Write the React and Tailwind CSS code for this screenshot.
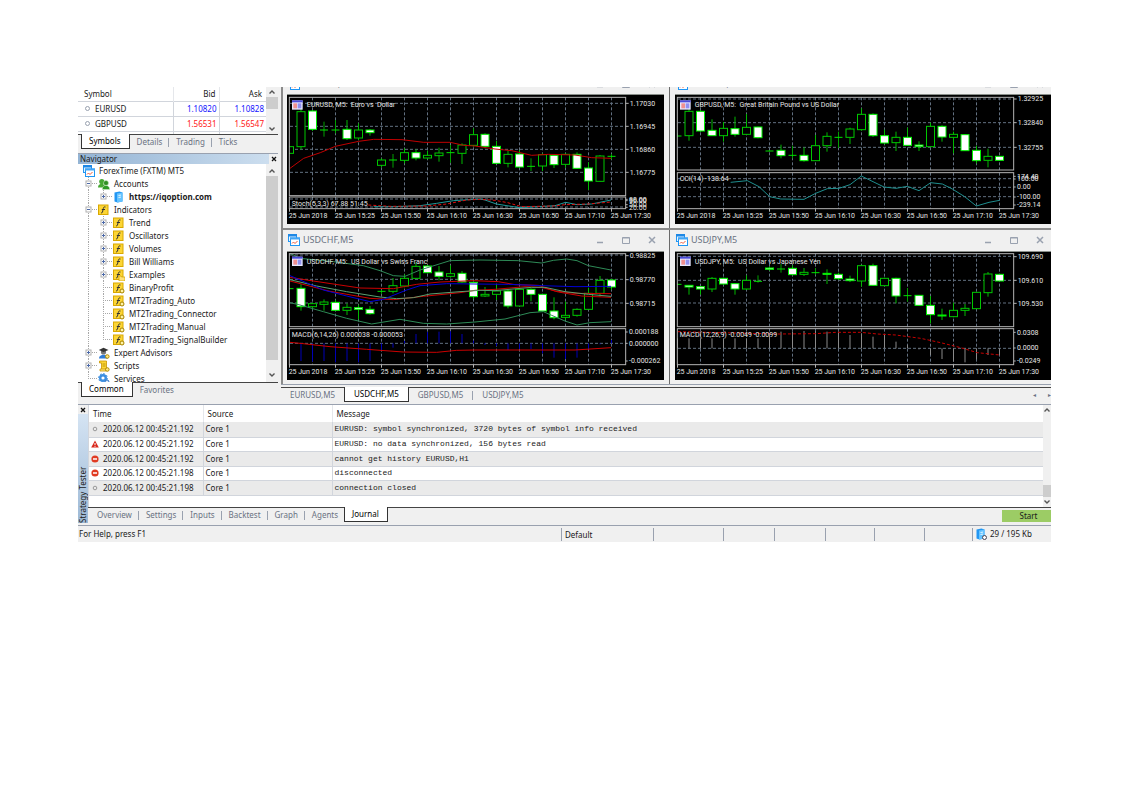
import React from 'react';
import clsx from 'clsx';

// [high, body top, body bottom, low, filled]; chart space is three units per pixel
const eurusd = {
  pair: 'EURUSD',
  name: 'Euro vs  Dollar',
  top: 45,
  height: 387,
  plot: [52, 347],
  sub: [351, 386],
  grid: [70, 139, 208, 277],
  prices: [[70, '1.17030'], [139, '1.16945'], [208, '1.16860'], [277, '1.16775']],
  subLevels: [357, 381],
  subLabels: [[358, '80.00'], [362, '96.00'], [374, '50.00'], [382, '20.00']],
  indicator: [370, 'Stoch(5,3,3) 67.88 51.45'],
  candles: [
    [198, 200, 220, 220, 0], [85, 95, 200, 208, 0], [90, 93, 148, 153, 1], [125, 150, 150, 170, 0],
    [120, 150, 150, 160, 0], [120, 148, 176, 180, 1], [130, 150, 174, 180, 0], [147, 150, 158, 167, 1],
    [235, 240, 256, 262, 0], [222, 240, 240, 263, 0], [205, 218, 241, 250, 0], [208, 218, 234, 241, 1],
    [212, 226, 234, 238, 0], [203, 219, 227, 245, 0], [195, 218, 218, 248, 0], [190, 195, 220, 252, 0],
    [145, 164, 196, 200, 0], [160, 163, 199, 205, 1], [183, 199, 250, 252, 1], [212, 223, 250, 262, 0],
    [210, 222, 261, 263, 1], [235, 259, 259, 273, 0], [220, 224, 258, 273, 0], [222, 226, 254, 264, 1],
    [220, 223, 253, 263, 0], [217, 223, 265, 267, 1], [247, 264, 303, 330, 1], [225, 228, 304, 305, 0],
    [222, 229, 229, 238, 0],
  ],
  lines: [
    { color: '#c00000', points: '9,265 50,235 100,218 145,199 215,184 260,178 345,179 410,187 490,187 530,196 564,198 624,207 674,212 734,226 784,223 864,225 914,233 972,235' },
    { color: '#1f9a9a', points: '260,380 324,380 399,377 449,370 499,362 579,357 594,360 628,372 697,383 804,377 836,367 870,374 914,372 972,360' },
    { color: '#e01010', dash: '9 6', points: '244,375 309,379 419,378 479,372 539,360 579,358 624,361 662,368 704,380 799,378 834,374 904,372 972,366' },
  ],
};

const gbpusd = {
  pair: 'GBPUSD',
  name: 'Great Britain Pound vs US Dollar',
  top: 45,
  height: 387,
  plot: [52, 270],
  sub: [278, 386],
  grid: [57, 128, 202],
  prices: [[57, '1.32925'], [128, '1.32840'], [202, '1.32755']],
  subLevels: [296, 322, 350],
  subLabels: [[289, '174.40'], [297, '100.00'], [321, '0.00'], [351, '-100.00'], [375, '-239.14']],
  indicator: [297, 'CCI(14) -138.64'],
  candles: [
    [160, 168, 168, 172, 0], [85, 94, 167, 182, 0], [90, 94, 153, 156, 1], [118, 151, 167, 168, 1],
    [126, 145, 167, 185, 0], [110, 146, 163, 170, 1], [102, 142, 163, 164, 0], [140, 141, 173, 175, 1],
    [210, 213, 213, 214, 0], [194, 211, 227, 235, 1], [197, 226, 226, 235, 0], [202, 226, 242, 245, 1],
    [165, 197, 242, 243, 0], [157, 169, 197, 215, 0], [155, 172, 172, 204, 0], [143, 147, 172, 192, 0],
    [85, 103, 149, 152, 0], [100, 103, 167, 171, 1], [149, 167, 189, 193, 1], [155, 172, 188, 213, 0],
    [143, 172, 196, 197, 1], [184, 195, 200, 213, 1], [128, 139, 200, 201, 0], [136, 139, 171, 185, 1],
    [155, 163, 172, 220, 0], [162, 164, 212, 213, 1], [197, 211, 242, 250, 1], [206, 229, 241, 262, 0],
    [228, 229, 241, 242, 1],
  ],
  lines: [
    { color: '#1f8f8f', points: '167,307 217,302 252,320 284,350 317,357 387,358 422,340 457,326 492,325 525,314 559,288 594,305 627,321 663,325 697,319 732,332 767,308 802,312 832,327 869,350 904,378 942,367 974,361' },
  ],
};

const usdchf = {
  pair: 'USDCHF',
  name: 'US Dollar vs Swiss Franc',
  top: 66,
  height: 384,
  plot: [71, 290],
  sub: [296, 404],
  grid: [75, 148, 219],
  prices: [[77, '0.98825'], [149, '0.98770'], [220, '0.98715']],
  subLevels: [340],
  subLabels: [[306, '0.000188'], [340, '0.000000'], [393, '-0.000262']],
  indicator: [315, 'MACD(6,14,26) 0.000038 -0.000053'],
  candles: [
    [174, 176, 176, 178, 0], [162, 175, 230, 242, 1], [218, 221, 230, 238, 0], [208, 216, 223, 242, 0],
    [210, 217, 241, 243, 1], [220, 232, 241, 255, 0], [224, 233, 238, 268, 1], [228, 238, 251, 254, 1],
    [180, 184, 184, 192, 0], [144, 167, 184, 190, 0], [133, 145, 168, 172, 0], [98, 109, 145, 147, 0],
    [105, 108, 128, 130, 1], [108, 126, 139, 151, 1], [106, 131, 139, 143, 0], [123, 130, 156, 158, 1],
    [155, 157, 200, 207, 1], [171, 193, 198, 201, 0], [164, 183, 193, 210, 0], [180, 183, 228, 235, 1],
    [174, 178, 228, 230, 0], [175, 178, 193, 214, 1], [192, 193, 243, 246, 1], [202, 243, 263, 268, 1],
    [215, 256, 262, 270, 0], [235, 238, 256, 260, 0], [173, 190, 238, 240, 0], [138, 151, 190, 200, 0],
    [147, 150, 171, 180, 1],
  ],
  lines: [
    { color: '#2e8b57', points: '9,70 39,85 139,95 229,107 279,122 319,137 354,139 399,120 489,92 579,90 694,92 764,99 799,91 839,87 870,92 904,107 972,120' },
    { color: '#2e8b57', points: '9,218 39,225 109,245 179,265 254,282 339,268 409,280 479,282 564,276 654,267 729,248 769,245 794,256 834,273 870,285 909,278 972,275' },
    { color: '#cc0000', points: '9,142 79,153 219,174 319,176 389,163 459,156 559,152 634,155 684,164 754,166 804,183 864,190 972,191' },
    { color: '#cc0000', points: '9,153 129,184 249,205 319,209 409,199 519,188 564,181 624,178 714,170 764,172 814,186 884,198 972,202' },
    { color: '#5aa070', points: '9,149 89,168 179,185 279,201 329,206 379,203 429,192 519,185 579,181 624,182 734,172 774,172 834,185 904,193 972,199' },
    { color: '#0000d8', points: '9,137 109,180 179,198 249,215 289,208 359,180 399,167 479,161 564,162 664,163 764,167 864,170 972,169' },
    { color: '#cc0000', points: '9,337 39,340 129,350 239,358 349,366 449,367 509,361 564,360 864,360 972,353' },
  ],
  bars: {
    color: '#0000b8',
    zero: 340,
    values: [340, 393, 395, 393, 397, 393, 397, 393, 360, 353, 333, 312, 306, 305, 304, 312, 332, 345, 348, 360, 357, 357, 370, 383, 387, 383, 358, 343, 330],
  },
};

const usdjpy = {
  pair: 'USDJPY',
  name: 'US Dollar vs Japanese Yen',
  top: 66,
  height: 384,
  plot: [71, 290],
  sub: [296, 404],
  grid: [79, 151, 219],
  prices: [[80, '109.690'], [151, '109.610'], [220, '109.530']],
  subLevels: [355],
  subLabels: [[307, '0.0308'], [354, '0.0000'], [393, '-0.0249']],
  indicator: [315, 'MACD(12,26,9) -0.0049 -0.0099'],
  candles: [
    [161, 163, 163, 165, 0], [165, 166, 171, 194, 1], [168, 170, 177, 194, 1], [141, 145, 177, 186, 0],
    [143, 145, 162, 165, 1], [160, 161, 177, 194, 1], [136, 151, 177, 180, 0], [136, 154, 154, 158, 0],
    [110, 114, 118, 122, 1], [102, 117, 117, 128, 0], [106, 115, 134, 136, 1], [114, 127, 133, 138, 0],
    [114, 128, 128, 134, 0], [118, 130, 133, 162, 1], [128, 133, 146, 150, 1], [137, 147, 152, 156, 1],
    [104, 107, 153, 170, 0], [101, 107, 166, 168, 1], [143, 145, 167, 168, 0], [143, 145, 198, 220, 1],
    [174, 197, 197, 215, 0], [195, 196, 226, 227, 1], [198, 226, 254, 280, 1], [236, 255, 258, 270, 1],
    [218, 241, 260, 262, 0], [222, 235, 241, 258, 0], [186, 187, 236, 237, 0], [126, 132, 188, 200, 0],
    [132, 133, 153, 154, 1],
  ],
  lines: [
    { color: '#c80000', dash: '9 6', points: '9,305 312,312 422,311 482,307 557,307 607,312 662,315 737,325 797,338 857,353 907,368 974,375' },
  ],
  bars: {
    color: '#8a8a8a',
    zero: 355,
    values: [325, 325, 325, 325, 325, 325, 325, 325, 310, 305, 305, 303, 303, 305, 305, 315, 310, 320, 315, 335, 345, 358, 375, 387, 395, 397, 388, 375, 375],
  },
};

const times = ['25 Jun 2018', '25 Jun 15:25', '25 Jun 15:50', '25 Jun 16:10', '25 Jun 16:30', '25 Jun 16:50', '25 Jun 17:10', '25 Jun 17:30'];

const candleX = (i) => 7.5 + i * 34.5;

const Candle = ({ x, data }) => {
  const [high, top, bottom, low, filled] = data;
  if (top === bottom) {
    return (
      <g stroke="#00e000" strokeWidth="3">
        <line x1={x} x2={x} y1={high} y2={low} stroke="#00a000" />
        <line x1={x - 12} x2={x + 12} y1={top} y2={top} />
      </g>
    );
  }
  return (
    <g strokeWidth="3">
      <line x1={x} x2={x} y1={high} y2={low} stroke="#00b800" />
      <rect
        x={x - 12}
        y={top}
        width="24"
        height={bottom - top}
        fill={filled ? '#ffffff' : '#000000'}
        stroke={filled ? '#00f000' : '#00c800'}
      />
    </g>
  );
};

const Chart = ({ chart }) => {
  const { top, height, plot, sub, bars } = chart;
  const gridLines = Array.from({ length: 14 }, (_, i) => 76.5 + i * 69);
  const right = 1016;

  return (
    <svg
      viewBox={`0 ${top} 1131 ${height}`}
      className="block h-auto w-full bg-black font-['Roboto','Liberation_Sans',sans-serif]"
      role="img"
      aria-label={`${chart.pair} M5 chart`}
    >
      <g stroke="#627080" strokeWidth="3" strokeDasharray="9 6">
        {gridLines.map((x) => (
          <React.Fragment key={x}>
            <line x1={x} x2={x} y1={plot[0]} y2={plot[1]} />
            <line x1={x} x2={x} y1={sub[0]} y2={sub[1]} />
          </React.Fragment>
        ))}
        {chart.grid.map((y) => <line key={y} x1="9" x2={right} y1={y} y2={y} />)}
        {chart.subLevels.map((y) => <line key={y} x1="9" x2={right} y1={y} y2={y} />)}
      </g>

      {/* Histogram */}
      {bars && bars.values.map((y, i) => (
        <line key={i} x1={candleX(i)} x2={candleX(i)} y1={bars.zero} y2={y} stroke={bars.color} strokeWidth="3" />
      ))}

      {chart.candles.map((c, i) => <Candle key={i} x={candleX(i)} data={c} />)}
      {chart.lines.map((l, i) => (
        <polyline key={i} points={l.points} fill="none" stroke={l.color} strokeWidth="3" strokeDasharray={l.dash} />
      ))}

      {/* Frames */}
      <rect x="0" y={plot[0]} width="6" height={sub[1] - plot[0]} fill="#000000" />
      <g fill="none" stroke="#b4b4b4" strokeWidth="3">
        <rect x="7" y={plot[0]} width={right - 7} height={plot[1] - plot[0]} />
        <rect x="7" y={sub[0]} width={right - 7} height={sub[1] - sub[0]} />
        {chart.prices.map(([y]) => <line key={y} x1={right} x2={right + 9} y1={y} y2={y} />)}
        {chart.subLabels.map(([y]) => <line key={y} x1={right} x2={right + 6} y1={y} y2={y} />)}
        {times.map((t, i) => <line key={t} x1={7.5 + i * 138} x2={7.5 + i * 138} y1={sub[1]} y2={sub[1] + 9} />)}
      </g>

      {/* Header */}
      <g>
        <rect x="15" y={plot[0] + 9} width="32" height="28" fill="#e8e8ff" />
        <rect x="15" y={plot[0] + 9} width="32" height="6" fill="#4a4ad8" />
        <rect x="19" y={plot[0] + 18} width="11" height="15" fill="#f09090" />
        <rect x="32" y={plot[0] + 18} width="11" height="15" fill="#9090f0" />
      </g>
      <g fill="#e6e6e6" fontSize="21">
        <text x="59" y={plot[0] + 30} className="whitespace-pre">{`${chart.pair}, M5:  ${chart.name}`}</text>
        <text x="14" y={chart.indicator[0] + 7}>{chart.indicator[1]}</text>
        {chart.prices.map(([y, label]) => <text key={y} x="1028" y={y + 7}>{label}</text>)}
        {chart.subLabels.map(([y, label]) => <text key={y} x="1026" y={y + 7}>{label}</text>)}
        {times.map((t, i) => <text key={t} x={5 + i * 138} y={sub[1] + 28}>{t}</text>)}
      </g>
    </svg>
  );
};

const TerminalIcon = () => (
  <svg className="h-[12px] w-[12px] shrink-0" viewBox="0 0 12 12" aria-hidden="true">
    <rect x="0.5" y="0.5" width="8" height="7" fill="#e8f4ff" stroke="#2196f3" />
    <rect x="0" y="0" width="9" height="2.5" fill="#1e88e5" />
    <rect x="2.5" y="4" width="9" height="7.5" fill="#fff" stroke="#2196f3" />
    <rect x="2" y="3.5" width="10" height="2" fill="#42a5f5" />
    <path d="M4 9.5l1.5-1.5 1.5 1.5 2.5-2.5" fill="none" stroke="#ef5a3c" />
  </svg>
);

const TitleBar = ({ title }) => (
  <div className="flex h-[20px] shrink-0 items-center pl-px">
    <TerminalIcon />
    <span className="ml-[3px] flex-1 text-[9px] text-gray-500">{title}</span>
    <div className="flex gap-[14px] pr-[6px] text-gray-400">
      <button aria-label="Minimize" className="h-[12px] w-[12px]">
        <svg viewBox="0 0 12 12"><path d="M3 8.5h6" stroke="currentColor" strokeWidth="1.5" /></svg>
      </button>
      <button aria-label="Maximize" className="h-[12px] w-[12px]">
        <svg viewBox="0 0 12 12"><path d="M2.5 3.5h7v6h-7zM2.5 4h7" fill="none" stroke="currentColor" /></svg>
      </button>
      <button aria-label="Close" className="h-[12px] w-[12px]">
        <svg viewBox="0 0 12 12"><path d="M3 3l6 6M9 3l-6 6" stroke="currentColor" strokeWidth="1.5" /></svg>
      </button>
    </div>
  </div>
);

const ChartWindow = ({ chart, cut, last }) => (
  <section className={clsx('min-w-0 pb-[4px]', last ? '-mr-px pl-[5px]' : 'border-r border-[#6a6a6a] pr-[5px] pl-[4px]')}>
    <div className={clsx('flex flex-col overflow-hidden', cut ? 'h-[7px] justify-end' : 'h-[21px]')}>
      <TitleBar title={`${chart.pair},M5`} />
    </div>
    <div className="border-t border-[#8a8f8a]">
      <Chart chart={chart} />
    </div>
  </section>
);

const TabStrip = ({ tabs, active, wide, className, children }) => (
  <div className={clsx('flex h-[15px] border-t border-[#444] bg-[#f0f0f0]', className)}>
    {tabs.map((tab, i) => {
      const on = tab === active;
      return (
        <React.Fragment key={tab}>
          <button
            className={clsx(
              'flex items-center whitespace-nowrap text-[8px]',
              wide ? 'px-[9px]' : 'pl-[7px]',
              !wide && (on ? 'pr-[8px]' : 'pr-[6px]'),
              on ? '-mt-px h-[15px] border border-t-0 border-[#333] bg-white text-black' : 'h-[14px] text-gray-500'
            )}
          >
            {tab}
          </button>
          {!on && i < tabs.length - 1 && tabs[i + 1] !== active && (
            <span className="h-[9px] w-px self-center bg-gray-400" />
          )}
        </React.Fragment>
      );
    })}
    {children}
  </div>
);

const Arrow = ({ up }) => (
  <svg viewBox="0 0 8 8" className="h-[8px] w-[8px]" aria-hidden="true">
    <path d={up ? 'M1.5 5.5L4 3l2.5 2.5' : 'M1.5 2.5L4 5l2.5-2.5'} fill="none" stroke="#555" strokeWidth="1.4" />
  </svg>
);

const ScrollBar = ({ label, className, thumb }) => (
  <div className={clsx('flex shrink-0 flex-col items-center overflow-hidden bg-[#f0f0f0]', className)}>
    <button aria-label={`${label} scroll up`} className="flex h-[10px] items-center"><Arrow up /></button>
    <div className="flex w-full min-h-0 flex-1 flex-col">
      <div className={clsx('w-full bg-[#cdcdcd]', thumb)} />
    </div>
    <button aria-label={`${label} scroll down`} className="flex h-[10px] items-center"><Arrow /></button>
  </div>
);

const quotes = [
  { symbol: 'EURUSD', bid: '1.10820', ask: '1.10828', color: 'text-[#1414ff]' },
  { symbol: 'GBPUSD', bid: '1.56531', ask: '1.56547', color: 'text-[#ff1414]' },
];

const MarketWatch = () => (
  <div>
    <div className="flex h-[47px] overflow-hidden bg-white">
      <table className="h-[48px] flex-1 table-fixed border-collapse text-[8px]">
        <thead>
          <tr className="h-[14px]">
            <th className="pl-[6px] text-left font-normal">Symbol</th>
            <th className="w-[46px] border-l border-gray-200 pr-[3px] text-right font-normal">Bid</th>
            <th className="w-[47px] border-l border-gray-200 pr-[4px] text-right font-normal">Ask</th>
          </tr>
        </thead>
        <tbody>
          {quotes.map((q) => (
            <tr key={q.symbol} className="h-[15px] border-y border-gray-300">
              <td className="pl-[7px]">
                <span className="flex items-center gap-[5px]">
                  <span className="h-[5px] w-[5px] rounded-full border border-gray-400" />
                  {q.symbol}
                </span>
              </td>
              <td className={clsx('border-l border-gray-300 pr-[2px] text-right', q.color)}>{q.bid}</td>
              <td className={clsx('border-l border-gray-300 pr-[2px] text-right', q.color)}>{q.ask}</td>
            </tr>
          ))}
          <tr>
            <td />
            <td className="border-l border-gray-300" />
            <td className="border-l border-gray-300" />
          </tr>
        </tbody>
      </table>
      <ScrollBar label="Symbols" className="w-[12px]" thumb="h-[12px]" />
    </div>
    <TabStrip tabs={['Symbols', 'Details', 'Trading', 'Ticks']} active="Symbols" className="pl-[3px]" />
  </div>
);

const FunctionIcon = ({ badge }) => (
  <svg viewBox="0 0 12 12" className="h-[12px] w-[12px] shrink-0" aria-hidden="true">
    <rect x="0.5" y="1" width="9.5" height="9.5" fill="#fcd535" stroke="#d9a800" />
    <path d="M7.5 3c-1.500-.4-2 .3-2.200 1.500l-.8 3.500c-.2.8-.6 1-1.500.8M3.800 5.500h3.200" fill="none" stroke="#333" />
    {badge === 'dot' && <circle cx="9" cy="9" r="2" fill="#fff3a8" stroke="#a88400" />}
    {badge === 'folder' && <path d="M6 7h2l.5 1H12v4H6z" fill="#ffe27a" stroke="#d0a000" strokeWidth=".7" />}
  </svg>
);

const AccountsIcon = () => (
  <svg viewBox="0 0 12 12" className="h-[12px] w-[12px] shrink-0" aria-hidden="true">
    <circle cx="3.800" cy="3.500" r="2.600" fill="#46a832" />
    <path d="M0 9.500c0-5 7-5 7.500 0z" fill="#46a832" />
    <circle cx="8" cy="5" r="2.500" fill="#2f8f22" stroke="#d8f0d0" strokeWidth=".5" />
    <path d="M4.200 11.500c0-5.500 7.500-5.500 7.500 0z" fill="#2f9a25" stroke="#d8f0d0" strokeWidth=".5" />
  </svg>
);

const ServerIcon = ({ badge }) => (
  <svg viewBox="0 0 12 12" className="h-[12px] w-[12px] shrink-0" aria-hidden="true">
    <path d="M1.500 1.500l5-1 3 1v9l-5 1-3-1z" fill="#2196f3" />
    <path d="M4 2.500l5.500-1v9l-5.500 1z" fill="#64c3ff" />
    <path d="M5.500 4.500l2.500-.4M5.500 6.500l2.500-.4" stroke="#fff" strokeWidth=".8" />
    {badge && <circle cx="9.500" cy="9.500" r="2" fill="#fff" stroke="#445" />}
  </svg>
);

const ExpertIcon = () => (
  <svg viewBox="0 0 12 12" className="h-[12px] w-[12px] shrink-0" aria-hidden="true">
    <path d="M1 11.500c0-5 9-5 9 0z" fill="#2e7bd6" />
    <circle cx="5.500" cy="5" r="2.600" fill="#777" />
    <path d="M.8 3L5.500.8l5 2.200-5 2z" fill="#333" />
    <circle cx="9.300" cy="9.500" r="1.800" fill="#ffe680" stroke="#b08a00" />
  </svg>
);

const ScriptIcon = () => (
  <svg viewBox="0 0 12 12" className="h-[12px] w-[12px] shrink-0" aria-hidden="true">
    <path d="M1.500 1h7v8.500h-5V3h-2z" fill="#fcd535" stroke="#c99700" strokeWidth=".8" />
    <path d="M4.500 4h3M4.500 6h3" stroke="#b08a00" strokeWidth=".8" />
    <path d="M2 9h6v2H2z" fill="#ffe680" stroke="#c99700" strokeWidth=".8" />
    <circle cx="9.300" cy="9.500" r="1.800" fill="#ffe680" stroke="#b08a00" />
  </svg>
);

const ServicesIcon = () => (
  <svg viewBox="0 0 12 12" className="h-[12px] w-[12px] shrink-0" aria-hidden="true">
    <circle cx="5" cy="5" r="2.800" fill="none" stroke="#3d8fe0" strokeWidth="2.400" />
    <circle cx="5" cy="5" r="4.400" fill="none" stroke="#3d8fe0" strokeDasharray="1.700 1.700" />
    <circle cx="9" cy="9" r="2" fill="#dcecff" stroke="#2a6fc0" />
  </svg>
);

// Dotted connector cell of the tree, with an optional expander box
const Branch = ({ line, box }) => (
  <svg viewBox="0 0 15 13" className="h-[13px] w-[15px] shrink-0" aria-hidden="true">
    <g stroke="#a8a8a8" strokeDasharray="1 1">
      {line !== 'none' && <path d={line === 'end' ? 'M6.500 0v7' : 'M6.500 0v13'} />}
      {line !== 'pass' && line !== 'none' && <path d="M8 6.500h7" />}
    </g>
    {box && (
      <>
        <rect x="4" y="4" width="5" height="5" fill="#fff" stroke="#b0b0b0" />
        <path d={box === '+' ? 'M5 6.500h3M6.500 5v3' : 'M5 6.500h3'} stroke="#4a68a8" />
      </>
    )}
  </svg>
);

const tree = [
  { label: 'ForexTime (FXTM) MT5', icon: <TerminalIcon />, cells: [] },
  { label: 'Accounts', icon: <AccountsIcon />, cells: [['tee', '-']] },
  { label: 'https://iqoption.com', icon: <ServerIcon />, cells: [['pass'], ['end', '+']], bold: true },
  { label: 'Indicators', icon: <FunctionIcon />, cells: [['tee', '-']] },
  { label: 'Trend', icon: <FunctionIcon />, cells: [['pass'], ['tee', '+']] },
  { label: 'Oscillators', icon: <FunctionIcon />, cells: [['pass'], ['tee', '+']] },
  { label: 'Volumes', icon: <FunctionIcon />, cells: [['pass'], ['tee', '+']] },
  { label: 'Bill Williams', icon: <FunctionIcon />, cells: [['pass'], ['tee', '+']] },
  { label: 'Examples', icon: <FunctionIcon badge="folder" />, cells: [['pass'], ['tee', '+']] },
  { label: 'BinaryProfit', icon: <FunctionIcon badge="dot" />, cells: [['pass'], ['tee']] },
  { label: 'MT2Trading_Auto', icon: <FunctionIcon badge="dot" />, cells: [['pass'], ['tee']] },
  { label: 'MT2Trading_Connector', icon: <FunctionIcon badge="dot" />, cells: [['pass'], ['tee']] },
  { label: 'MT2Trading_Manual', icon: <FunctionIcon badge="dot" />, cells: [['pass'], ['tee']] },
  { label: 'MT2Trading_SignalBuilder', icon: <FunctionIcon badge="dot" />, cells: [['pass'], ['end']] },
  { label: 'Expert Advisors', icon: <ExpertIcon />, cells: [['tee', '+']] },
  { label: 'Scripts', icon: <ScriptIcon />, cells: [['tee', '+']] },
  { label: 'Services', icon: <ServicesIcon />, cells: [['end']] },
];

const Navigator = () => (
  <div className="mt-[4px]">
    <div className="flex h-[11px] items-center justify-between border-t border-gray-400 bg-gradient-to-r from-[#94b4d4] to-[#cfe0f0] pl-[2px]">
      <h2 className="text-[8px] leading-[10px]">Navigator</h2>
      <button aria-label="Close navigator" className="flex h-[10px] w-[9px] items-center justify-center bg-[#f0f0f0]">
        <svg viewBox="0 0 6 6" className="h-[6px] w-[6px]"><path d="M1 1l4 4M5 1L1 5" stroke="#111" strokeWidth="1.300" /></svg>
      </button>
    </div>
    <div className="flex h-[218px] overflow-hidden bg-white">
      <ul className="flex-1 pl-[4px]">
        {tree.map((node) => (
          <li key={node.label} className="flex h-[13px] items-center">
            {node.cells.map(([line, box], i) => <Branch key={i} line={line} box={box} />)}
            <span className="mr-[4px] ml-px">{node.icon}</span>
            <span className={clsx('whitespace-nowrap text-[8px] leading-[13px]', node.bold && 'font-bold')}>{node.label}</span>
          </li>
        ))}
      </ul>
      <ScrollBar label="Navigator" className="w-[12px] py-[2px]" thumb="h-[184px]" />
    </div>
    <TabStrip tabs={['Common', 'Favorites']} active="Common" className="pl-[3px]" />
  </div>
);

const journal = [
  { level: 'info', time: '2020.06.12 00:45:21.192', message: 'EURUSD: symbol synchronized, 3720 bytes of symbol info received' },
  { level: 'warn', time: '2020.06.12 00:45:21.192', message: 'EURUSD: no data synchronized, 156 bytes read' },
  { level: 'error', time: '2020.06.12 00:45:21.192', message: 'cannot get history EURUSD,H1' },
  { level: 'error', time: '2020.06.12 00:45:21.198', message: 'disconnected' },
  { level: 'info', time: '2020.06.12 00:45:21.198', message: 'connection closed' },
];

const LevelIcon = ({ level }) => (
  <svg viewBox="0 0 8 8" className="h-[8px] w-[8px] shrink-0" aria-hidden="true">
    {level === 'info' && <circle cx="4" cy="4" r="1.800" fill="none" stroke="#999" />}
    {level === 'warn' && (
      <>
        <path d="M4 .5L7.800 7.500H.2z" fill="#d9281c" />
        <path d="M4 3v2M4 5.800v1" stroke="#fff" />
      </>
    )}
    {level === 'error' && (
      <>
        <circle cx="4" cy="4" r="3.600" fill="#e03a22" />
        <path d="M2 4h4" stroke="#fff" strokeWidth="1.500" />
      </>
    )}
  </svg>
);

const StrategyTester = () => (
  <section className="flex h-[121px] border-t border-gray-400">
    <div className="flex w-[10px] shrink-0 flex-col pb-[2px]">
      <button aria-label="Close tester" className="flex h-[9px] items-center justify-center">
        <svg viewBox="0 0 6 6" className="h-[6px] w-[6px]"><path d="M1 1l4 4M5 1L1 5" stroke="#111" strokeWidth="1.300" /></svg>
      </button>
      <div className="flex flex-1 rotate-180 items-center justify-start bg-gradient-to-t from-[#d5e4f3] to-[#9db9d6] [writing-mode:vertical-rl]">
        <h2 className="w-[10px] whitespace-nowrap text-[8px] leading-[10px]">Strategy Tester</h2>
      </div>
    </div>
    <div className="flex min-w-0 flex-1 flex-col">
      <div className="flex h-[102px] bg-white">
        <div className="min-w-0 flex-1 overflow-hidden border-l border-gray-300">
          <table className="w-full table-fixed border-collapse text-[8px]">
            <thead>
              <tr className="h-[17px] text-left">
                <th className="w-[114px] pl-[4px] font-normal">Time</th>
                <th className="w-[129px] border-l border-gray-200 pl-[4px] font-normal">Source</th>
                <th className="border-l border-gray-200 pl-[4px] font-normal">Message</th>
              </tr>
            </thead>
            <tbody>
              {journal.map((row, i) => (
                <tr key={i} className="h-[14px] border-b border-gray-300 odd:h-[15px] odd:bg-[#eaeaea]">
                  <td className="pl-[2px]">
                    <span className="flex items-center gap-[4px] whitespace-nowrap leading-[12px]">
                      <LevelIcon level={row.level} />
                      {row.time}
                    </span>
                  </td>
                  <td className="border-l border-gray-300 pl-[2px] leading-[12px]">Core 1</td>
                  <td className="border-l border-gray-300 pl-[2px] font-['Liberation_Mono',monospace] leading-[12px]">{row.message}</td>
                </tr>
              ))}
            </tbody>
          </table>
        </div>
        <ScrollBar label="Journal" className="w-[8px]" thumb="mt-auto h-[12px]" />
      </div>
      <TabStrip
        tabs={['Overview', 'Settings', 'Inputs', 'Backtest', 'Graph', 'Agents', 'Journal']}
        active="Journal"
        className="pl-[2px]"
      >
        <button className="mt-[2px] ml-auto h-[12px] w-[49px] bg-[#9ccc65] pl-[4px] text-[8px] leading-[12px]">Start</button>
      </TabStrip>
    </div>
  </section>
);

const StatusBar = () => (
  <footer className="flex h-[17px] items-center border-t border-gray-400 text-[8px]">
    <span className="flex-1 pl-px">For Help, press F1</span>
    <span className="h-[13px] w-[92px] border-l border-gray-400 pl-[3px] leading-[13px]">Default</span>
    <span className="h-[13px] w-[70px] border-l border-gray-400" />
    <span className="h-[13px] w-[51px] border-l border-gray-400" />
    <span className="h-[13px] w-[51px] border-l border-gray-400" />
    <span className="h-[13px] w-[49px] border-l border-gray-400" />
    <span className="h-[13px] w-[50px] border-l border-gray-400" />
    <span className="h-[13px] w-[48px] border-l border-gray-400" />
    <span className="flex h-[13px] w-[79px] items-center gap-[3px] border-l border-gray-400 pl-[2px]">
      <ServerIcon badge />
      29 / 195 Kb
    </span>
  </footer>
);

const App = () => (
  <div className="bg-white pt-[87px] pr-[71px] pb-[40px] pl-[78px] font-['Noto_Sans','Open_Sans',sans-serif] text-[#1a1a1a]">
    <main className="overflow-hidden bg-[#f0f0f0]">
      <div className="flex h-[317px]">
        <aside className="w-[203px] shrink-0 pr-[3px]">
          <MarketWatch />
          <Navigator />
        </aside>
        <div className="min-w-0 flex-1">
          <div className="grid grid-cols-[387fr_381fr] border-l-2 border-[#8a8a8a]">
            <ChartWindow chart={eurusd} cut />
            <ChartWindow chart={gbpusd} cut last />
          </div>
          <div className="grid grid-cols-[387fr_381fr] border-t-2 border-l-2 border-[#8a8a8a]">
            <ChartWindow chart={usdchf} />
            <ChartWindow chart={usdjpy} last />
          </div>
          <div className="border-t border-gray-400 pt-[2px]">
            <TabStrip tabs={['EURUSD,M5', 'USDCHF,M5', 'GBPUSD,M5', 'USDJPY,M5']} active="USDCHF,M5" wide>
              <div className="ml-auto flex items-center gap-[12px] text-[6px] text-gray-500">
                <button aria-label="Previous tab">◂</button>
                <button aria-label="Next tab">▸</button>
              </div>
            </TabStrip>
          </div>
        </div>
      </div>
      <StrategyTester />
      <StatusBar />
    </main>
  </div>
);

export default App;
